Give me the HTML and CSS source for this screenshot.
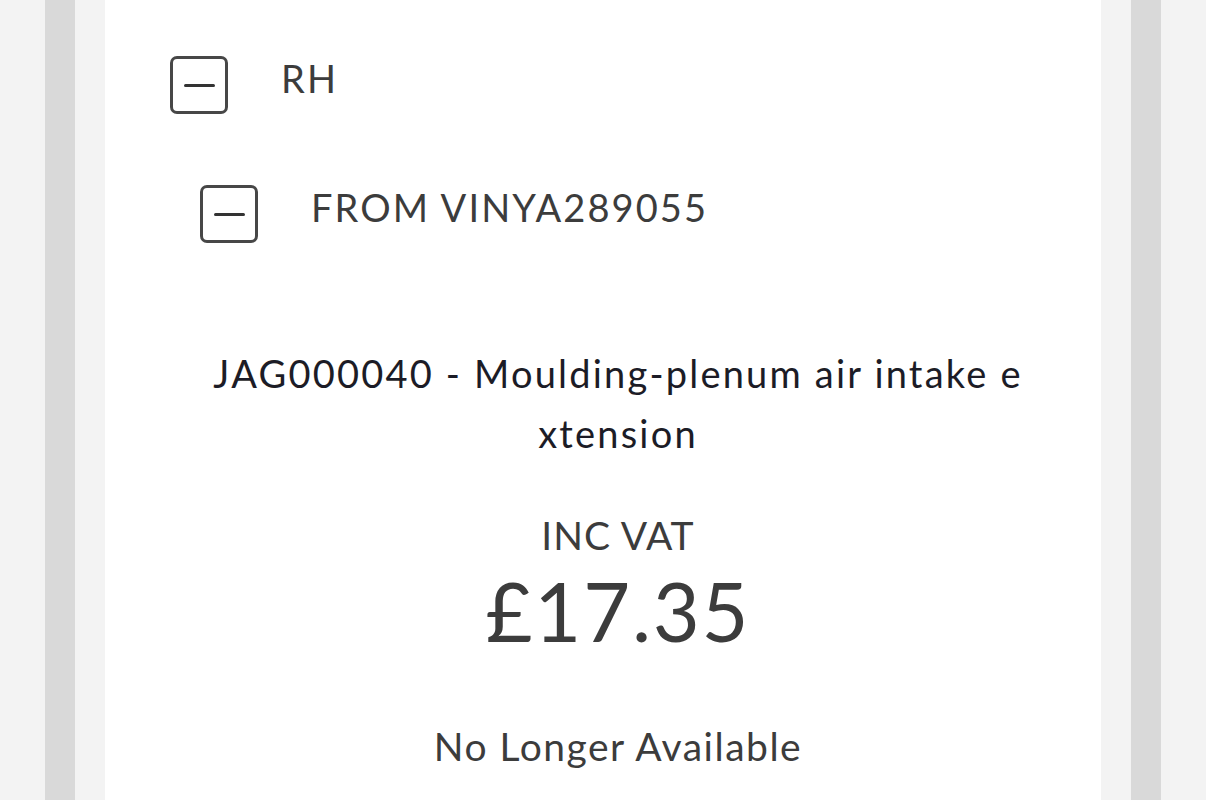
FILE: index.html
```html
<!DOCTYPE html>
<html lang="en">
<head>
<meta charset="utf-8">
<title>Part</title>
<link rel="stylesheet" href="styles.css">
</head>
<body>
<div class="frame">
  <div class="rail">
    <div class="gutter">
      <main class="card">
        <div class="tree-row level-1">
          <span class="toggle" aria-label="collapse"><span class="minus"></span></span>
          <span class="tree-label">RH</span>
        </div>
        <div class="tree-row level-2">
          <span class="toggle" aria-label="collapse"><span class="minus"></span></span>
          <span class="tree-label">FROM VINYA289055</span>
        </div>
        <section class="product">
          <h2 class="product-title">JAG000040 - Moulding-plenum air intake extension</h2>
          <div class="vat">INC VAT</div>
          <div class="price">£17.35</div>
          <div class="status">No Longer Available</div>
        </section>
      </main>
    </div>
  </div>
</div>
</body>
</html>
```

FILE: styles.css
```css
html, body {
  margin: 0;
  padding: 0;
  height: 100%;
}
body {
  font-family: "Lato", "Liberation Sans", sans-serif;
  color: #3c3c3c;
  background: #f3f3f3;
  overflow: hidden;
}
.frame {
  height: 800px;
  padding: 0 45px;
  background: #f3f3f3;
}
.rail {
  height: 100%;
  padding: 0 30px;
  background: #d9d9d9;
}
.gutter {
  height: 100%;
  padding: 0 30px;
  background: #f3f3f3;
}
.card {
  height: 100%;
  background: #ffffff;
  display: flex;
  flex-direction: column;
}
.tree-row {
  display: flex;
  align-items: center;
  height: 58px;
}
.level-1 {
  margin-top: 56px;
  padding-left: 65px;
}
.level-2 {
  margin-top: 71px;
  padding-left: 95px;
}
.toggle {
  box-sizing: border-box;
  width: 58px;
  height: 58px;
  border: 3px solid #474747;
  border-radius: 7px;
  display: flex;
  align-items: center;
  justify-content: center;
  flex-shrink: 0;
}
.minus {
  width: 31px;
  height: 3px;
  border-radius: 2px;
  background: #333;
}
.tree-label {
  margin-left: 53px;
  margin-bottom: 14px;
  font-size: 38px;
  line-height: 46px;
  color: #3c3c3c;
  letter-spacing: 2.1px;
}
.product {
  display: flex;
  flex-direction: column;
  align-items: center;
  padding-left: 30px;
  margin-top: 100px;
}
.product-title {
  margin: 0;
  width: 828px;
  font-size: 38px;
  font-weight: 400;
  line-height: 60px;
  letter-spacing: 2.2px;
  text-align: center;
  color: #1c1c26;
  word-break: break-all;
}
.vat {
  margin-top: 47px;
  font-size: 39px;
  line-height: 50px;
  letter-spacing: 1px;
}
.price {
  margin-top: 6px;
  font-size: 81px;
  line-height: 90px;
  letter-spacing: 1.8px;
}
.status {
  margin-top: 65px;
  font-size: 39px;
  line-height: 50px;
  letter-spacing: 1.5px;
}
```
